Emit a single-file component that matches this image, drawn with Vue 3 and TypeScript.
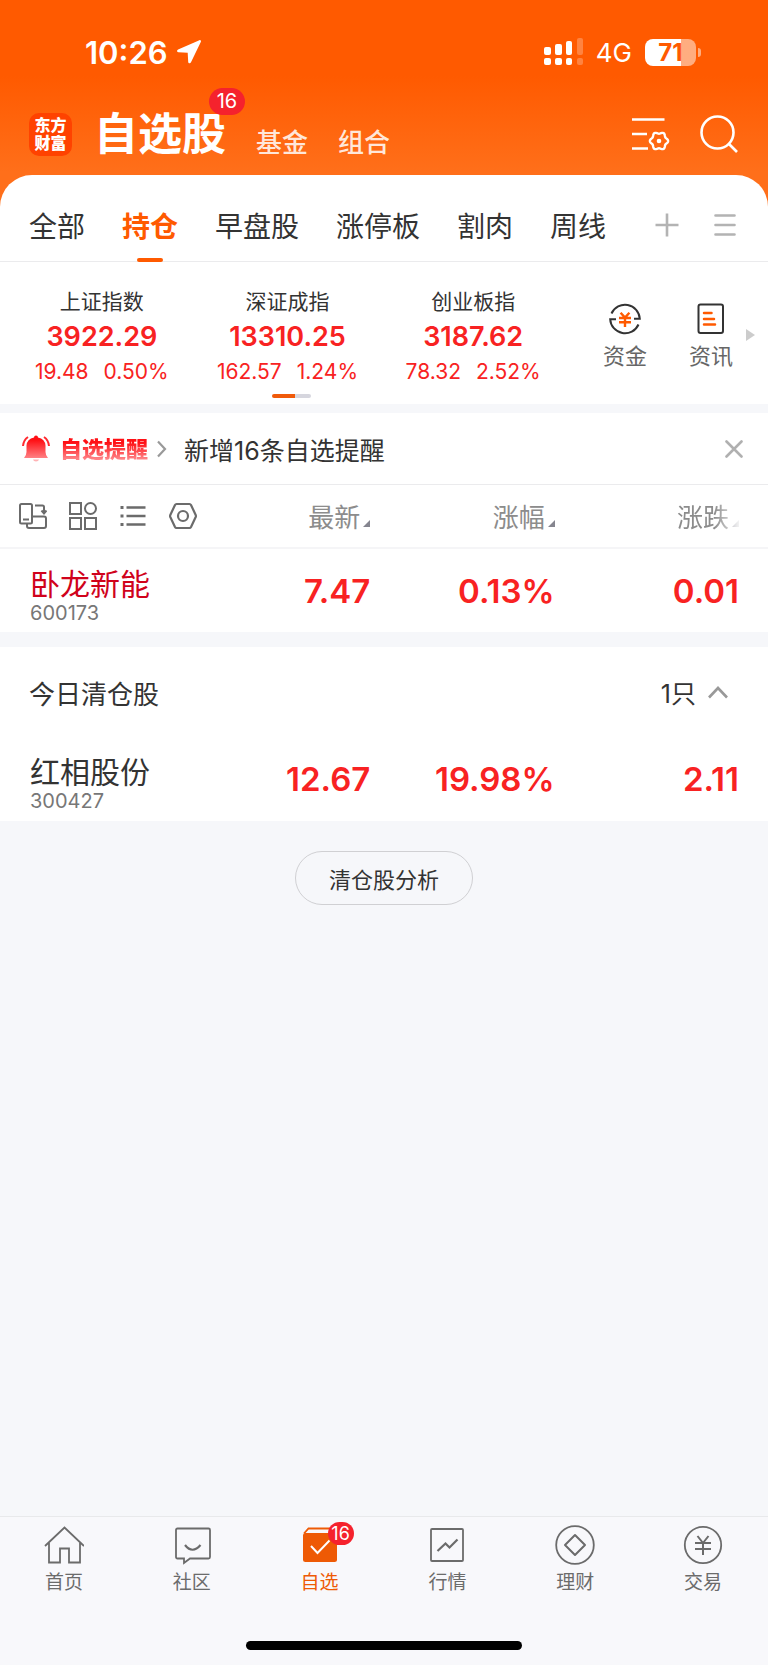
<script setup lang="ts">
import { ref } from 'vue'

interface MarketIndex { name: string; value: string; change: string; percent: string }
interface Stock { name: string; code: string; price: string; percent: string; change: string; alert?: boolean }
interface NavItem { id: string; label: string; badge?: number }

const groups = ['全部', '持仓', '早盘股', '涨停板', '割肉', '周线']
const activeGroup = ref('持仓')

const indices: MarketIndex[] = [
  { name: '上证指数', value: '3922.29', change: '19.48', percent: '0.50%' },
  { name: '深证成指', value: '13310.25', change: '162.57', percent: '1.24%' },
  { name: '创业板指', value: '3187.62', change: '78.32', percent: '2.52%' },
]

const columns = ['最新', '涨幅', '涨跌']
const holdings: Stock[] = [
  { name: '卧龙新能', code: '600173', price: '7.47', percent: '0.13%', change: '0.01', alert: true },
]
const cleared: Stock[] = [
  { name: '红相股份', code: '300427', price: '12.67', percent: '19.98%', change: '2.11' },
]

const showAlert = ref(true)
const expanded = ref(true)

const navItems: NavItem[] = [
  { id: 'home', label: '首页' },
  { id: 'community', label: '社区' },
  { id: 'watch', label: '自选', badge: 16 },
  { id: 'market', label: '行情' },
  { id: 'wealth', label: '理财' },
  { id: 'trade', label: '交易' },
]
const activeNav = ref('watch')

// Outline of a gear with six rounded teeth
function gearPath(cx: number, cy: number, radius: number, depth: number): string {
  const points = Array.from({ length: 72 }, (_, i) => {
    const angle = (i / 72) * Math.PI * 2
    const r = radius + depth * Math.cos(6 * angle)
    return `${(cx + r * Math.cos(angle)).toFixed(2)} ${(cy + r * Math.sin(angle)).toFixed(2)}`
  })
  return `M${points.join('L')}Z`
}
const gear = gearPath(27, 26, 8.2, 0.9)
</script>

<template>
  <div class="page">
    <header class="header">
      <div class="status">
        <div class="status-left">
          <span class="clock">10:26</span>
          <svg width="26" height="26" viewBox="0 0 26 26" aria-hidden="true">
            <path d="M23.4 1.2 2.1 10.4c-1.6.7-1.3 2.7.4 2.8l9.2.5.5 9.2c.1 1.7 2.1 2 2.8.4L24.9 2.7c.4-1-.5-1.9-1.5-1.5Z" fill="#fff" />
          </svg>
        </div>
        <div class="status-right">
          <svg width="40" height="28" viewBox="0 0 40 28" fill="#fff" aria-hidden="true">
            <rect x="0" y="9" width="7" height="8" rx="2" /><rect x="0" y="20" width="7" height="7" rx="2" />
            <rect x="11" y="6" width="7" height="11" rx="2" /><rect x="11" y="20" width="7" height="7" rx="2" />
            <rect x="22" y="3" width="6" height="14" rx="2" /><rect x="22" y="20" width="6" height="7" rx="2" />
            <g opacity=".25"><rect x="33" y="0" width="6" height="17" rx="2" /><rect x="33" y="20" width="6" height="7" rx="2" /></g>
          </svg>
          <span class="network">4G</span>
          <span class="battery"><span class="battery-body">71</span><span class="battery-cap"></span></span>
        </div>
      </div>

      <div class="titlebar">
        <span class="logo"><span>东方</span><span>财富</span></span>
        <h1 class="title">自选股<span class="badge title-badge">16</span></h1>
        <a class="title-link" href="#fund">基金</a>
        <a class="title-link" href="#portfolio">组合</a>
        <div class="title-actions">
          <button type="button" aria-label="列表设置">
            <svg width="38" height="38" viewBox="0 0 38 38" fill="none" stroke="#fff" stroke-width="2.6">
              <path d="M0 4.500h32.500M0 19h15M0 33.500h16" />
              <path :d="gear" stroke-width="2.4" />
              <circle cx="27" cy="26" r="2.3" fill="#fff" stroke="none" />
            </svg>
          </button>
          <button type="button" aria-label="搜索">
            <svg width="38" height="38" viewBox="0 0 38 38" fill="none" stroke="#fff" stroke-width="2.6">
              <circle cx="17.500" cy="17.500" r="16" /><path d="m28.500 28.500 8.500 8.500" />
            </svg>
          </button>
        </div>
      </div>
    </header>

    <main class="content">
      <section class="card sheet">
        <nav class="tabs" aria-label="自选分组">
          <button
            v-for="group in groups" :key="group" type="button" class="tab"
            :class="{ active: group === activeGroup }" @click="activeGroup = group"
          >{{ group }}</button>
          <div class="tab-tools">
            <button type="button" aria-label="添加">
              <svg width="24" height="24" viewBox="0 0 24 24" stroke="#b3b3b3" stroke-width="2.6"><path d="M12 .5v23M.5 12h23" /></svg>
            </button>
            <button type="button" aria-label="菜单">
              <svg width="24" height="24" viewBox="0 0 24 24" stroke="#b3b3b3" stroke-width="2.6" stroke-linecap="round"><path d="M2.500 2.500h19M2.500 12h19M2.500 21.500h19" /></svg>
            </button>
          </div>
        </nav>

        <div class="indices">
          <div class="index-list">
            <div v-for="item in indices" :key="item.name" class="index">
              <span class="index-name">{{ item.name }}</span>
              <strong class="index-value">{{ item.value }}</strong>
              <span class="index-change"><span>{{ item.change }}</span><span>{{ item.percent }}</span></span>
            </div>
            <span class="pager"></span>
          </div>
          <div class="index-tools">
            <button type="button" class="index-tool">
              <svg width="34" height="34" viewBox="0 0 34 34" fill="none" stroke="#333" stroke-width="2">
                <path d="M3.500 11.500A14.800 14.800 0 0 1 31.800 16.800H26M30.500 22.500A14.800 14.800 0 0 1 2.200 17.200H8" />
                <path d="m12.600 10.800 4.400 4.800 4.400-4.800M11 16h12M11 20.300h12M17 15.500V25" stroke="#ff5a00" stroke-width="2.4" />
              </svg>
              资金
            </button>
            <button type="button" class="index-tool">
              <svg width="34" height="34" viewBox="0 0 34 34" fill="none" stroke="#333" stroke-width="2">
                <rect x="4.500" y="2.500" width="24.500" height="28.500" rx="2" />
                <path d="M10 11h7.500M10 17h10M10 22.500h11" stroke="#ff5a00" stroke-width="2.5" stroke-linecap="round" />
              </svg>
              资讯
            </button>
            <svg width="9" height="12" viewBox="0 0 9 12" aria-hidden="true"><path d="M0 0 9 6 0 12Z" fill="#ccc" /></svg>
          </div>
        </div>
      </section>

      <section class="card">
        <div v-if="showAlert" class="alert">
          <svg width="28" height="28" viewBox="0 0 28 28" aria-hidden="true">
            <defs>
              <linearGradient id="bell" x1="0" y1="0" x2="0" y2="1"><stop offset="0.2" stop-color="#ff0f14" /><stop offset="1" stop-color="#ff8084" /></linearGradient>
            </defs>
            <path d="M12 2.500Q12 .5 14 .5t2 2q7 1.500 7.500 8v6.500q0 3 2.500 6H2q2.500-3 2.500-6v-6.500Q5 4 12 2.500Z" fill="url(#bell)" />
            <path d="M11 24.500h6q-.5 2-3 2t-3-2Z" fill="#ffb3b5" />
            <path d="M6 2Q1.500 5 1 11M22 2q4.500 3 5 9" fill="none" stroke="#ff2a30" stroke-width="2" />
          </svg>
          <a class="alert-tag" href="#alerts">自选提醒</a>
          <svg width="10" height="18" viewBox="0 0 10 18" fill="none" stroke="#999" stroke-width="2.2" aria-hidden="true"><path d="m1 1.500 7 7.500-7 7.500" /></svg>
          <span class="alert-text">新增16条自选提醒</span>
          <button type="button" class="alert-close" aria-label="关闭" @click="showAlert = false">
            <svg width="18" height="18" viewBox="0 0 18 18" stroke="#b0b0b0" stroke-width="2.6" stroke-linecap="round"><path d="m1.500 1.500 15 15M16.500 1.500l-15 15" /></svg>
          </button>
        </div>

        <table class="stocks">
          <thead>
            <tr>
              <th class="name-col" scope="col">
                <div class="view-tools">
                  <button type="button" aria-label="横屏">
                    <svg width="28" height="28" viewBox="0 0 28 28" fill="none" stroke="#6b6b6b" stroke-width="2">
                      <rect x="1" y="2" width="12" height="19.500" rx="1.500" /><path d="M4 17.500h6M16 3.500h7.500q1.500 0 1.500 1.500v6M22.500 8.500l2.500 3 2.500-3" />
                      <path d="M13 14.500h12q2 0 2 2v7.500q0 2-2 2H10q-2 0-2-2v-2.500" />
                    </svg>
                  </button>
                  <button type="button" aria-label="宫格">
                    <svg width="28" height="28" viewBox="0 0 28 28" fill="none" stroke="#6b6b6b" stroke-width="2">
                      <rect x="1" y="1" width="11" height="11" /><circle cx="21.500" cy="6.500" r="5.500" />
                      <rect x="1" y="16" width="11" height="11" /><rect x="16" y="16" width="11" height="11" />
                    </svg>
                  </button>
                  <button type="button" aria-label="列表">
                    <svg width="28" height="28" viewBox="0 0 28 28" fill="none" stroke="#6b6b6b" stroke-width="2.4">
                      <path d="M7.500 5.500h19M7.500 14h19M7.500 22.500h19" /><path d="M1.500 5.500h3M1.500 14h3M1.500 22.500h3" stroke-width="3" />
                    </svg>
                  </button>
                  <button type="button" aria-label="设置">
                    <svg width="28" height="28" viewBox="0 0 28 28" fill="none" stroke="#6b6b6b" stroke-width="2.2" stroke-linejoin="round">
                      <path d="M7.500 2h13q1 0 1.500 1l4.700 10q.4 1 0 2L22 25q-.5 1-1.500 1h-13q-1 0-1.500-1L1.300 15q-.4-1 0-2L6 3q.5-1 1.500-1Z" /><circle cx="14" cy="14" r="5" />
                    </svg>
                  </button>
                </div>
              </th>
              <th v-for="column in columns" :key="column" scope="col">
                <button type="button" class="sort">
                  {{ column }}<svg width="7" height="7" viewBox="0 0 7 7" aria-hidden="true"><path d="M7 0v7H0Z" fill="#85858f" /></svg>
                </button>
              </th>
            </tr>
          </thead>
          <tbody>
            <tr v-for="stock in holdings" :key="stock.code">
              <td class="name-col">
                <span class="stock-name" :class="{ alerting: stock.alert }">{{ stock.name }}</span>
                <span class="stock-code">{{ stock.code }}</span>
              </td>
              <td>{{ stock.price }}</td>
              <td>{{ stock.percent }}</td>
              <td>{{ stock.change }}</td>
            </tr>
          </tbody>
        </table>
      </section>

      <section class="card cleared">
        <div class="cleared-head">
          <h2>今日清仓股</h2>
          <button type="button" :aria-expanded="expanded" @click="expanded = !expanded">
            1只
            <svg width="20" height="14" viewBox="0 0 20 14" fill="none" stroke="#999" stroke-width="2.6"><path d="m1 12.500 9-9.500 9 9.500" /></svg>
          </button>
        </div>
        <table v-if="expanded" class="stocks">
          <tbody>
            <tr v-for="stock in cleared" :key="stock.code">
              <td class="name-col">
                <span class="stock-name">{{ stock.name }}</span>
                <span class="stock-code">{{ stock.code }}</span>
              </td>
              <td>{{ stock.price }}</td>
              <td>{{ stock.percent }}</td>
              <td>{{ stock.change }}</td>
            </tr>
          </tbody>
        </table>
      </section>

      <button type="button" class="analysis">清仓股分析</button>
    </main>

    <footer class="bottom">
      <nav class="bottom-nav" aria-label="主导航">
        <a
          v-for="item in navItems" :key="item.id" :href="'#' + item.id" class="nav-item"
          :class="{ active: item.id === activeNav }" @click="activeNav = item.id"
        >
          <span class="nav-icon">
            <svg width="40" height="40" viewBox="0 0 40 40" fill="none" stroke="currentColor" stroke-width="1.8">
              <template v-if="item.id === 'home'">
                <path d="M1 21 20.500 2.500 40 21M5 18v19.500h11V23.500h9v14h11V18" />
              </template>
              <template v-else-if="item.id === 'community'">
                <path d="M5.500 3.500h31q1.500 0 1.500 1.500v27q0 1.500-1.500 1.500H18l-6 4.500v-4.500H5.500Q4 33.500 4 32V5q0-1.500 1.500-1.500Z" />
                <path d="M13 20q7.500 9.500 15.500 0" stroke-width="2.2" />
              </template>
              <template v-else-if="item.id === 'watch'">
                <path d="M4 8.500 8.500 3.500H31l5 5" /><rect x="3" y="8" width="34" height="29" rx="2.500" fill="currentColor" stroke="none" />
                <path d="m11 21 6.500 7L29.500 15.500" stroke="#fff" stroke-width="2" />
              </template>
              <template v-else-if="item.id === 'market'">
                <rect x="4" y="4" width="32" height="32" rx="1" /><path d="m10.500 26 8-7.500 4 4 8-8" stroke-width="2.2" />
              </template>
              <template v-else-if="item.id === 'wealth'">
                <circle cx="20" cy="20" r="18.800" /><path d="M20 10 30 20 20 30 10 20Z" stroke-width="2" stroke-linejoin="round" />
              </template>
              <template v-else>
                <circle cx="20" cy="20" r="18.200" /><path d="m14.500 11 5.500 7 5.500-7M12 18h16M12 24h16M20 18v12" stroke-width="2" />
              </template>
            </svg>
            <span v-if="item.badge" class="badge nav-badge">{{ item.badge }}</span>
          </span>
          {{ item.label }}
        </a>
      </nav>
      <span class="home-bar"></span>
    </footer>
  </div>
</template>

<style>
body {
  margin: 0;
}
</style>

<style scoped>
.page {
  display: flex;
  flex-direction: column;
  min-height: 100vh;
  background: #f6f7fa;
  color: #333;
  font-family: Inter, "Noto Sans CJK SC", sans-serif;
}

button {
  padding: 0;
  border: 0;
  background: none;
  color: inherit;
  font: inherit;
  cursor: pointer;
}

a {
  color: inherit;
  text-decoration: none;
}

svg {
  display: block;
  flex: none;
}

.header {
  padding-bottom: 48px;
  background: linear-gradient(#ff5a00 0, #ff5a00 76px, #ff6f1a 172px);
  color: #fff;
}

.status {
  display: flex;
  justify-content: space-between;
  align-items: center;
  height: 104px;
  padding: 0 67px 0 85px;
}

.status-left,
.status-right {
  display: flex;
  align-items: center;
}

.status-left {
  gap: 8px;
}

.clock {
  font-size: 31px;
  font-weight: 600;
}

.network {
  margin: 0 13px 0 12px;
  font-size: 26px;
}

.battery {
  display: flex;
  align-items: center;
  gap: 2px;
}

.battery-body {
  width: 51px;
  height: 27px;
  border-radius: 8px;
  background: linear-gradient(90deg, #fff 71%, rgba(255, 255, 255, 0.5) 71%);
  color: #ff5a00;
  font-size: 24px;
  font-weight: 700;
  line-height: 27px;
  text-align: center;
}

.battery-cap {
  width: 3px;
  height: 9px;
  border-radius: 0 4px 4px 0;
  background: rgba(255, 255, 255, 0.5);
}

.titlebar {
  display: flex;
  align-items: center;
  height: 60px;
  padding: 0 30px 0 29px;
}

.logo {
  display: flex;
  flex-direction: column;
  justify-content: center;
  width: 43px;
  height: 43px;
  margin-right: 22px;
  border-radius: 10px;
  background: #ff4200;
  font-size: 16px;
  font-weight: 900;
  line-height: 18px;
  text-align: center;
}

.title {
  position: relative;
  margin: 0;
  font-size: 44px;
  font-weight: 700;
  line-height: 60px;
}

.badge {
  position: absolute;
  border-radius: 14px;
  background: #f5222d;
  color: #fff;
  font-weight: 400;
  text-align: center;
}

.title-badge {
  top: -16px;
  left: 115px;
  width: 36px;
  font-size: 20px;
  line-height: 27px;
}

.title-link {
  margin: 18px 0 0 30px;
  color: rgba(255, 255, 255, 0.85);
  font-size: 26px;
  font-weight: 500;
  line-height: 36px;
}

.title-actions {
  display: flex;
  gap: 30px;
  margin-left: auto;
}

.content {
  display: flex;
  flex-direction: column;
  flex: 1;
}

.card {
  background: #fff;
}

.sheet {
  margin-top: -37px;
  margin-bottom: 9px;
  border-radius: 32px 32px 0 0;
}

.tabs {
  display: flex;
  gap: 37px;
  height: 86px;
  padding: 0 31px 0 29px;
  border-bottom: 1px solid #ebebed;
}

.tab {
  position: relative;
  padding-top: 14px;
  font-size: 28px;
  white-space: nowrap;
}

.tab.active {
  color: #ff5a00;
  font-weight: 700;
}

.tab.active::after {
  content: "";
  position: absolute;
  bottom: -1px;
  left: calc(50% - 13px);
  width: 26px;
  height: 4px;
  border-radius: 2px;
  background: #ff5a00;
}

.tab-tools {
  display: flex;
  align-items: center;
  gap: 34px;
  margin-left: auto;
  padding-top: 14px;
}

.indices {
  display: flex;
  height: 142px;
  padding: 0 13px 0 9px;
}

.index-list {
  position: relative;
  display: flex;
  flex: 1;
  padding-top: 24px;
}

.index {
  display: flex;
  flex: 1;
  flex-direction: column;
  align-items: center;
}

.index-name {
  font-size: 21px;
  line-height: 32px;
}

.index-value {
  color: #f82222;
  font-size: 27px;
  font-weight: 600;
  line-height: 38px;
}

.index-change {
  display: flex;
  gap: 15px;
  color: #f82222;
  font-size: 21px;
  line-height: 32px;
}

.pager {
  position: absolute;
  bottom: 6px;
  left: calc(50% - 16px);
  width: 39px;
  height: 4px;
  border-radius: 2px;
  background: linear-gradient(90deg, #f05a0a 60%, #d6d6de 60%);
}

.index-tools {
  display: flex;
  align-items: center;
  margin-left: 24px;
  padding-top: 4px;
}

.index-tool {
  display: flex;
  flex-direction: column;
  align-items: center;
  gap: 4px;
  width: 70px;
  padding-top: 4px;
  color: #666;
  font-size: 22px;
  line-height: 32px;
}

.index-tool + .index-tool {
  margin-left: 16px;
}

.alert {
  display: flex;
  align-items: center;
  height: 71px;
  padding: 0 25px 0 22px;
  border-bottom: 1px solid #ebebed;
}

.alert-tag {
  margin: 0 9px 0 10px;
  background: linear-gradient(#ff1015 30%, #ff8084 80%);
  background-clip: text;
  color: transparent;
  font-size: 22px;
  font-weight: 900;
  line-height: 32px;
}

.alert-text {
  margin-left: 17px;
  font-size: 25px;
}

.alert-close {
  margin-left: auto;
}

.stocks {
  width: 100%;
  border-collapse: collapse;
  table-layout: fixed;
}

.stocks th,
.stocks td {
  width: 24%;
  box-sizing: border-box;
  padding: 0 29px 0 0;
  text-align: right;
  font-weight: 400;
}

.stocks th {
  height: 63px;
  padding-top: 3px;
  border-bottom: 2px solid #f5f5f7;
}

.stocks td {
  height: 84px;
  color: #f82222;
  font-size: 33px;
  font-weight: 600;
}

.stocks .name-col {
  width: 28%;
  padding: 0 0 0 30px;
  text-align: left;
}

.stocks th.name-col {
  padding-left: 19px;
}

.view-tools {
  display: flex;
  gap: 22px;
}

.sort {
  display: inline-flex;
  align-items: baseline;
  gap: 3px;
  color: #8c8c8c;
  font-size: 26px;
  line-height: 38px;
  white-space: nowrap;
}

.stocks th:last-child .sort {
  mask-image: linear-gradient(90deg, #000 60%, rgba(0, 0, 0, 0.1));
}

.stock-name,
.stock-code {
  display: block;
  font-weight: 400;
}

.stock-name {
  padding-top: 8px;
  color: #333;
  font-size: 30px;
  line-height: 36px;
}

.stock-name.alerting {
  color: #d0021b;
}

.stock-code {
  color: #777;
  font-size: 20px;
  line-height: 22px;
}

.cleared {
  margin-top: 15px;
}

.cleared-head {
  display: flex;
  justify-content: space-between;
  align-items: center;
  height: 90px;
  padding: 0 40px 0 29px;
}

.cleared-head h2 {
  margin: 0;
  font-size: 26px;
  font-weight: 400;
}

.cleared-head button {
  display: flex;
  align-items: center;
  gap: 12px;
  font-size: 25px;
}

.analysis {
  align-self: center;
  height: 54px;
  margin: 30px 0;
  padding: 0 33px;
  border: 1px solid #d0d0d3;
  border-radius: 27px;
  font-size: 22px;
}

.bottom {
  display: flex;
  flex-direction: column;
  align-items: center;
  border-top: 1px solid #e8e9eb;
  background: #f8f8fb;
}

.bottom-nav {
  display: flex;
  align-self: stretch;
  height: 124px;
  padding: 8px 1px 0 0;
  box-sizing: border-box;
}

.nav-item {
  display: flex;
  flex: 1;
  flex-direction: column;
  align-items: center;
  color: #6b6b6b;
  font-size: 19px;
  line-height: 32px;
}

.nav-item.active {
  color: #ee5a05;
}

.nav-icon {
  position: relative;
  height: 42px;
}

.nav-badge {
  top: -3px;
  right: -14px;
  width: 26px;
  font-size: 18px;
  line-height: 23px;
}

.home-bar {
  width: 36%;
  height: 9px;
  margin-bottom: 15px;
  border-radius: 5px;
  background: #000;
}
</style>
